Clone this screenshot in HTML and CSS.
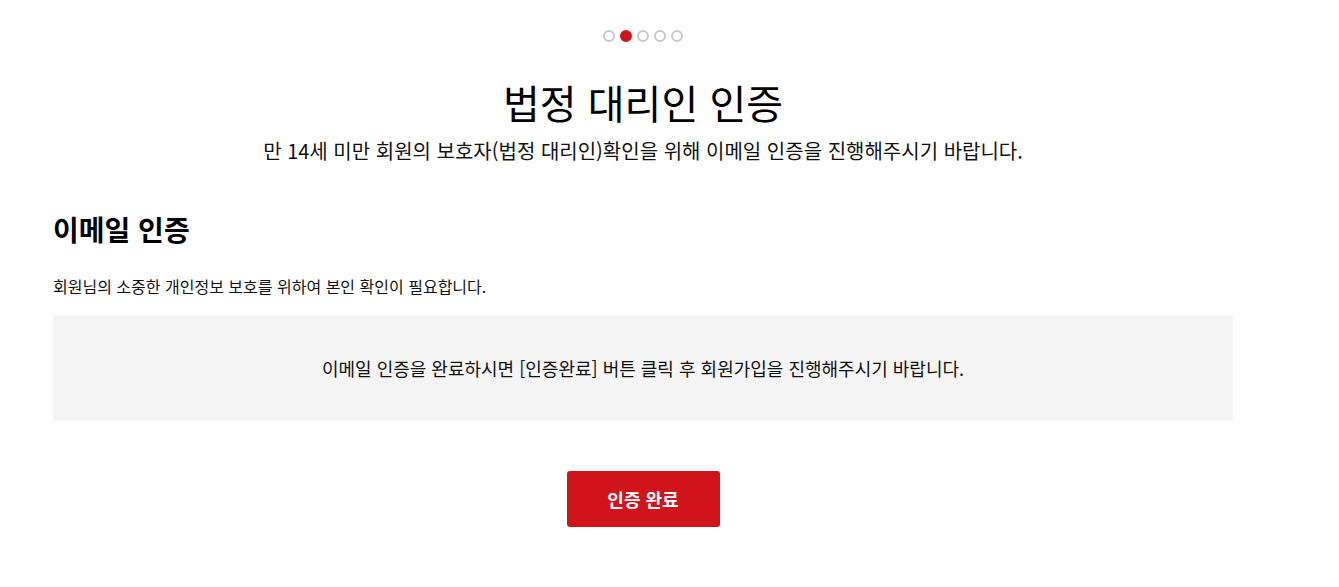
FILE: index.html
```html
<!DOCTYPE html>
<html lang="ko">
<head>
    <meta charset="UTF-8">
    <link rel="stylesheet" href="styles.css">
</head>
<body>
    <div class="container">
        <div class="steps">
            <span class="step"></span>
            <span class="step active"></span>
            <span class="step"></span>
            <span class="step"></span>
            <span class="step"></span>
        </div>

        <div class="page-head">
            <h1 class="title">법정 대리인 인증</h1>
            <p class="subtitle">만 14세 미만 회원의 보호자(법정 대리인)확인을 위해 이메일 인증을 진행해주시기 바랍니다.</p>
        </div>

        <div class="section">
            <h2 class="section-title">이메일 인증</h2>
            <p class="section-desc">회원님의 소중한 개인정보 보호를 위하여 본인 확인이 필요합니다.</p>
            <div class="notice-box">
                이메일 인증을 완료하시면 [인증완료] 버튼 클릭 후 회원가입을 진행해주시기 바랍니다.
            </div>
        </div>

        <div class="btn-row">
            <button class="btn btn-primary" id="confirmBtn">인증 완료</button>
        </div>
    </div>
</body>
</html>
```

FILE: styles.css
```css
* {
    box-sizing: border-box;
}

body {
    margin: 0;
    padding: 0;
    font-family: "Noto Sans CJK KR", "Noto Sans", sans-serif;
    background: #fff;
    color: #111;
}

.container {
    width: 1180px;
    margin-left: 53px;
    padding-top: 30px;
}

.steps {
    display: flex;
    justify-content: center;
    gap: 5px;
}

.step {
    width: 12px;
    height: 12px;
    border: 2px solid #c8c8c8;
    border-radius: 50%;
}

.step.active {
    background: #d1131c;
    border-color: #d1131c;
}

.page-head {
    text-align: center;
    margin-top: 32px;
}

.title {
    margin: 0;
    font-size: 40px;
    font-weight: 400;
    line-height: 56px;
    color: #000;
}

.subtitle {
    margin: 6px 0 0;
    font-size: 20px;
    line-height: 30px;
    color: #111;
}

.section {
    margin-top: 43px;
}

.section-title {
    margin: 0;
    font-size: 28px;
    font-weight: 700;
    line-height: 40px;
    color: #000;
}

.section-desc {
    margin: 25px 0 0;
    font-size: 16px;
    line-height: 24px;
}

.notice-box {
    margin-top: 17px;
    height: 106px;
    background: #f5f5f5;
    display: flex;
    align-items: center;
    justify-content: center;
    font-size: 18px;
}

.btn-row {
    display: flex;
    justify-content: center;
    margin-top: 50px;
}

.btn {
    width: 153px;
    height: 56px;
    border: none;
    border-radius: 3px;
    font-family: inherit;
    font-size: 18px;
    font-weight: 700;
    cursor: pointer;
}

.btn-primary {
    background: #d1131c;
    color: #fff;
}
```
